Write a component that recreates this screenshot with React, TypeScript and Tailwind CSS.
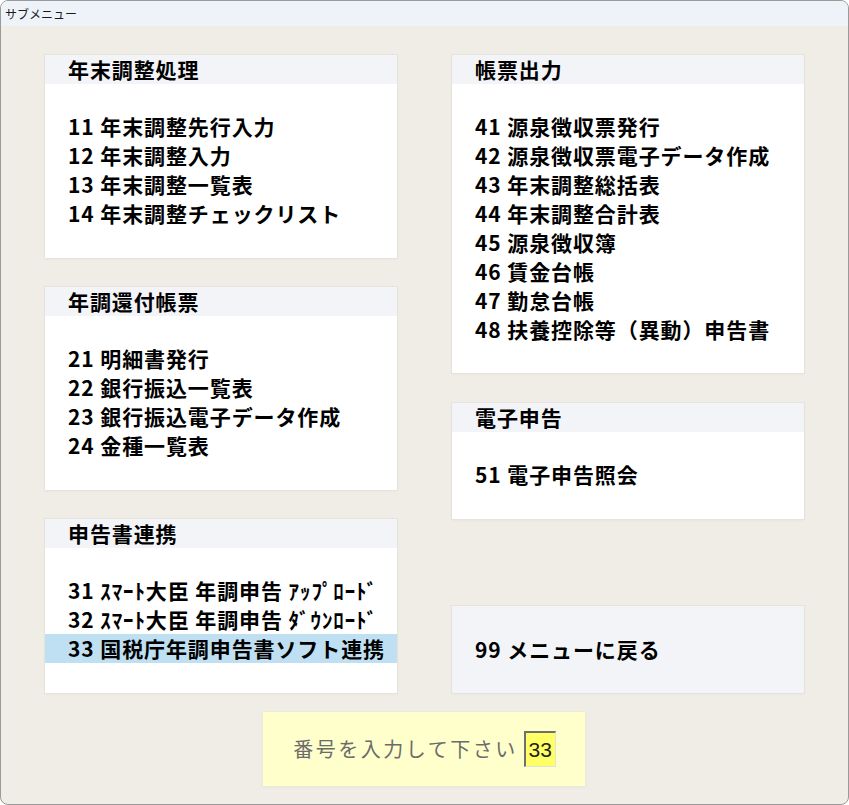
import React from "react";

interface MenuGroup {
  title: string;
  items: string[];
  height: string;
  selected?: string;
}

const leftGroups: MenuGroup[] = [
  {
    title: "年末調整処理",
    height: "h-[203px]",
    items: ["11 年末調整先行入力", "12 年末調整入力", "13 年末調整一覧表", "14 年末調整チェックリスト"],
  },
  {
    title: "年調還付帳票",
    height: "h-[203px]",
    items: ["21 明細書発行", "22 銀行振込一覧表", "23 銀行振込電子データ作成", "24 金種一覧表"],
  },
  {
    title: "申告書連携",
    height: "h-[174px]",
    selected: "33",
    items: [
      "31 ｽﾏｰﾄ大臣 年調申告 ｱｯﾌﾟﾛｰﾄﾞ",
      "32 ｽﾏｰﾄ大臣 年調申告 ﾀﾞｳﾝﾛｰﾄﾞ",
      "33 国税庁年調申告書ソフト連携",
    ],
  },
];

const rightGroups: MenuGroup[] = [
  {
    title: "帳票出力",
    height: "h-[318px]",
    items: [
      "41 源泉徴収票発行",
      "42 源泉徴収票電子データ作成",
      "43 年末調整総括表",
      "44 年末調整合計表",
      "45 源泉徴収簿",
      "46 賃金台帳",
      "47 勤怠台帳",
      "48 扶養控除等（異動）申告書",
    ],
  },
  {
    title: "電子申告",
    height: "h-[116px]",
    items: ["51 電子申告照会"],
  },
];

const font = "font-['Noto_Sans_CJK_JP','Noto_Sans',sans-serif]";

const Panel = ({ group }: { group: MenuGroup }) => (
  <div className={`w-[352px] ${group.height} bg-white shadow-[0_0_0_1px_#e6e3dc,0_1px_3px_rgba(0,0,0,0.05)]`}>
    <div className="h-[29px] bg-[#f3f4f8] px-[23px] text-[21px] font-bold leading-[29px] tracking-[0.9px] text-black">
      {group.title}
    </div>
    <div className="pt-[28px]">
      {group.items.map((item) => (
        <div
          key={item}
          className={`h-[29px] px-[23px] text-[21px] font-bold leading-[29px] tracking-[0.9px] text-black whitespace-nowrap ${
            group.selected && item.startsWith(group.selected) ? "bg-[#bfe0f2]" : ""
          }`}
        >
          {item}
        </div>
      ))}
    </div>
  </div>
);

export default function App() {
  return (
    <div className={`w-[849px] h-[805px] bg-white ${font}`}>
      <div className="w-[849px] h-[805px] rounded-[8px] border border-[#9a9a9a] bg-[#f0ede6] overflow-hidden flex flex-col">
        {/* Title bar */}
        <div className="h-[25px] bg-[#eef3f9] pl-[4px] text-[12px] leading-[25px] text-[#1a1a1a]">
          サブメニュー
        </div>

        {/* Menu panels */}
        <div className="flex gap-[55px] pl-[44px] pt-[29px]">
          <div className="flex flex-col gap-[29px]">
            {leftGroups.map((g) => (
              <Panel key={g.title} group={g} />
            ))}
          </div>
          <div className="flex flex-col">
            <Panel group={rightGroups[0]} />
            <div className="mt-[30px]">
              <Panel group={rightGroups[1]} />
            </div>
            <div className="mt-[87px] w-[352px] h-[87px] bg-[#f3f4f8] px-[23px] flex items-center text-[21px] font-bold tracking-[0.9px] text-black shadow-[0_0_0_1px_#e6e3dc,0_1px_3px_rgba(0,0,0,0.05)]">
              99 メニューに戻る
            </div>
          </div>
        </div>

        {/* Number input */}
        <div className="flex justify-center mt-[19px] pr-[2px]">
          <div className="w-[322px] h-[74px] bg-[#ffffcc] flex items-center justify-center gap-[6px] pl-[2px] shadow-[0_0_0_1px_#ece9df,0_1px_3px_rgba(0,0,0,0.06)]">
            <span className="text-[20px] tracking-[2.5px] text-[#6b6b6b]">番号を入力して下さい</span>
            <div className="w-[32px] h-[36px] bg-[#ffff66] border-t-2 border-l-2 border-b border-r border-t-[#6f6f6f] border-l-[#6f6f6f] border-b-[#e0e0e0] border-r-[#e0e0e0] flex items-center justify-center font-['Liberation_Sans',sans-serif] text-[21px] text-[#222]">
              33
            </div>
          </div>
        </div>
      </div>
    </div>
  );
}
